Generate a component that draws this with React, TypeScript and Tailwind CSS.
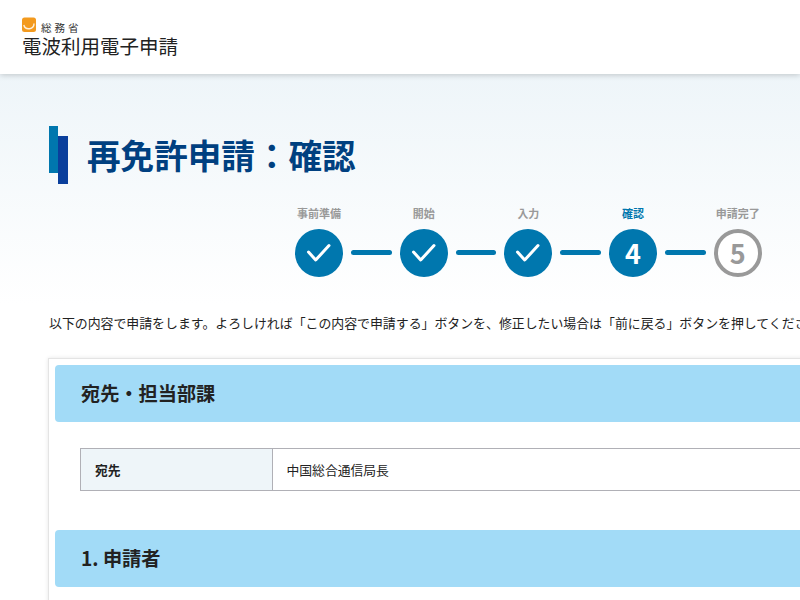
const jp = "font-['Noto_Sans_CJK_JP','Noto_Sans',sans-serif]";

const steps = [
  { label: "事前準備", state: "done" },
  { label: "開始", state: "done" },
  { label: "入力", state: "done" },
  { label: "確認", state: "current", num: "4" },
  { label: "申請完了", state: "todo", num: "5" },
];

function Stepper() {
  return (
    <div className="flex items-end pl-[295px]">
      {steps.map((s, i) => (
        <div key={s.label} className="flex items-end">
          <div className="flex w-12 flex-col items-center">
            <span
              className={
                "mb-[9px] whitespace-nowrap text-[11px] leading-[14px] font-bold " +
                (s.state === "current" ? "text-[#0077ae]" : "text-[#999]")
              }
            >
              {s.label}
            </span>
            {s.state === "done" && (
              <div className="h-12 w-12 rounded-full bg-[#0077ae]">
                <svg width="48" height="48" viewBox="0 0 48 48" fill="none">
                  <path d="M13.5 23L20.7 31L34 16.5" stroke="#fff" strokeWidth="3" strokeLinecap="round" strokeLinejoin="round" />
                </svg>
              </div>
            )}
            {s.state === "current" && (
              <div className="flex h-12 w-12 items-center justify-center rounded-full bg-[#0077ae] text-[27px] font-bold text-white">
                {s.num}
              </div>
            )}
            {s.state === "todo" && (
              <div className="flex h-12 w-12 items-center justify-center rounded-full border-4 border-[#999] bg-white text-[27px] font-bold text-[#999]">
                {s.num}
              </div>
            )}
          </div>
          {i < steps.length - 1 && (
            <div className="mx-2 mb-[22px] h-[5px] w-[40.7px] rounded-full bg-[#0077ae]" />
          )}
        </div>
      ))}
    </div>
  );
}

function SectionBar({ title }: { title: string }) {
  return (
    <div className="flex h-[57px] items-center rounded bg-[#a2dbf7] pl-[26px] text-[19.2px] font-bold text-[#222]">
      {title}
    </div>
  );
}

export default function App() {
  return (
    <div className={jp + " h-[600px] w-[800px] overflow-hidden bg-white text-[#222]"}>
      <header className="relative z-10 h-[74px] w-full bg-white pl-[22px] pt-[17px] shadow-[0_1px_6px_rgba(0,0,0,0.2)]">
        <div className="flex h-[16px] items-start">
          <svg width="15" height="15" viewBox="0 0 15 15" className="mr-[4px]">
            <rect x="0" y="0.5" width="14" height="14.5" rx="2.5" fill="#f39a1e" />
            <path d="M1.8 8A5.2 5.2 0 0 0 12 6.5" stroke="#fff" strokeWidth="1.4" fill="none" opacity="0.85" />
          </svg>
          <span className="mt-[5px] text-[10.5px] leading-[11px] tracking-[3px] text-[#333]">総務省</span>
        </div>
        <div className="text-[19.5px] leading-[26px] text-[#222]">電波利用電子申請</div>
      </header>
      <main className="h-[526px] w-[1100px] bg-gradient-to-b from-[#eef5f9] to-white to-[230px]">
        <div className="flex items-center pl-[49px] pt-[52px]">
          <div className="flex h-[58px] w-[19px] items-start">
            <div className="h-[47px] w-[9px] bg-[#0077ae]" />
            <div className="mt-[10px] h-[48px] w-[10px] bg-[#0a3f9c]" />
          </div>
          <h1 className="ml-[19px] text-[33.6px] leading-[58px] font-bold text-[#004080]">再免許申請：確認</h1>
        </div>
        <div className="mt-[22px]">
          <Stepper />
        </div>
        <p className="mt-[36px] whitespace-nowrap pl-[49px] text-[12.9px] leading-[20px] text-[#222]">
          以下の内容で申請をします。よろしければ「この内容で申請する」ボタンを、修正したい場合は「前に戻る」ボタンを押してください。
        </p>
        <section className="ml-[48px] mt-[25px] h-[400px] w-[1000px] border border-[#e4e4e4] bg-white p-[6px] shadow-[0_0_4px_rgba(0,0,0,0.1)]">
          <SectionBar title="宛先・担当部課" />
          <div className="px-[25px] pt-[26px] pb-[39px]">
            <div className="flex h-[43px] border border-[#b0b0b6] text-[12.8px]">
              <div className="flex w-[192px] items-center border-r border-[#b0b0b6] bg-[#eef5f9] pl-[14px] font-bold">宛先</div>
              <div className="flex items-center pl-[13.5px]">中国総合通信局長</div>
            </div>
          </div>
          <SectionBar title="1. 申請者" />
        </section>
      </main>
    </div>
  );
}
